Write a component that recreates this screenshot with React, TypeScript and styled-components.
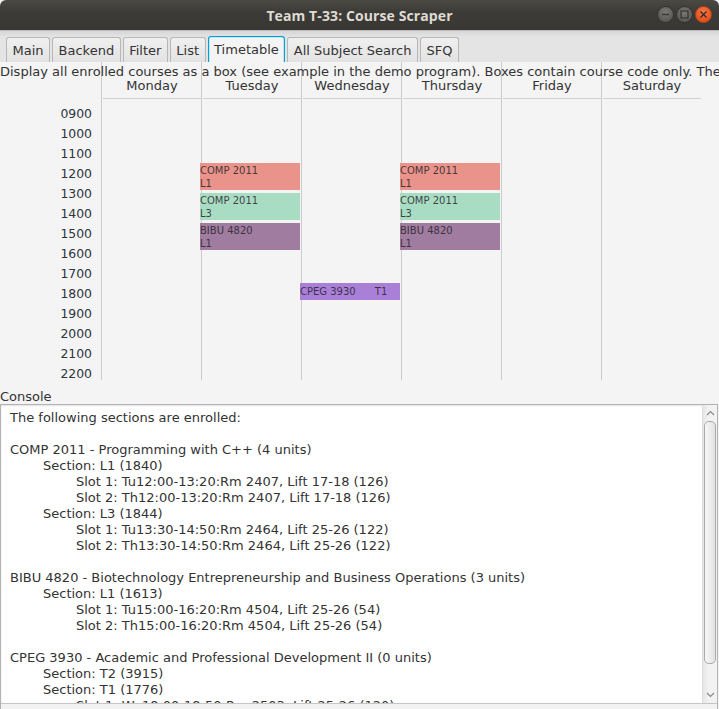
import styled, { createGlobalStyle, css } from "styled-components";

const GlobalStyle = createGlobalStyle`
  html, body {
    margin: 0;
    padding: 0;
    background: #f4f4f4;
  }
  * {
    box-sizing: border-box;
  }
`;

const FONT = `"DejaVu Sans", "Liberation Sans", sans-serif`;
const HOUR_HEIGHT = 20;
const FIRST_HOUR = 9;

const tabs = ["Main", "Backend", "Filter", "List", "Timetable", "All Subject Search", "SFQ"];
const days = ["Monday", "Tuesday", "Wednesday", "Thursday", "Friday", "Saturday"];
const hours = Array.from({ length: 14 }, (_, i) => String(FIRST_HOUR + i).padStart(2, "0") + "00");

type Block = {
  day: number;
  start: number;
  end: number;
  code: string;
  section: string;
  color: string;
  inline?: boolean;
};

const blocks: Block[] = [
  { day: 1, start: 12, end: 13 + 20 / 60, code: "COMP 2011", section: "L1", color: "#e9938a" },
  { day: 1, start: 13.5, end: 14 + 50 / 60, code: "COMP 2011", section: "L3", color: "#a8dcc3" },
  { day: 1, start: 15, end: 16 + 20 / 60, code: "BIBU 4820", section: "L1", color: "#9f7ca0" },
  { day: 3, start: 12, end: 13 + 20 / 60, code: "COMP 2011", section: "L1", color: "#e9938a" },
  { day: 3, start: 13.5, end: 14 + 50 / 60, code: "COMP 2011", section: "L3", color: "#a8dcc3" },
  { day: 3, start: 15, end: 16 + 20 / 60, code: "BIBU 4820", section: "L1", color: "#9f7ca0" },
  { day: 2, start: 18, end: 18 + 50 / 60, code: "CPEG 3930", section: "T1", color: "#a97fd8", inline: true },
];

const consoleLines: { level: number; text: string }[] = [
  { level: 0, text: "The following sections are enrolled:" },
  { level: 0, text: "" },
  { level: 0, text: "COMP 2011 - Programming with C++ (4 units)" },
  { level: 1, text: "Section: L1 (1840)" },
  { level: 2, text: "Slot 1: Tu12:00-13:20:Rm 2407, Lift 17-18 (126)" },
  { level: 2, text: "Slot 2: Th12:00-13:20:Rm 2407, Lift 17-18 (126)" },
  { level: 1, text: "Section: L3 (1844)" },
  { level: 2, text: "Slot 1: Tu13:30-14:50:Rm 2464, Lift 25-26 (122)" },
  { level: 2, text: "Slot 2: Th13:30-14:50:Rm 2464, Lift 25-26 (122)" },
  { level: 0, text: "" },
  { level: 0, text: "BIBU 4820 - Biotechnology Entrepreneurship and Business Operations (3 units)" },
  { level: 1, text: "Section: L1 (1613)" },
  { level: 2, text: "Slot 1: Tu15:00-16:20:Rm 4504, Lift 25-26 (54)" },
  { level: 2, text: "Slot 2: Th15:00-16:20:Rm 4504, Lift 25-26 (54)" },
  { level: 0, text: "" },
  { level: 0, text: "CPEG 3930 - Academic and Professional Development II (0 units)" },
  { level: 1, text: "Section: T2 (3915)" },
  { level: 1, text: "Section: T1 (1776)" },
  { level: 2, text: "Slot 1: We18:00-18:50:Rm 2503, Lift 25-26 (120)" },
];

export default function App() {
  return (
    <>
      <GlobalStyle />
      <Window>
        <TitleBar>
          <Title>Team T-33: Course Scraper</Title>
          <WindowButtons>
            <WinButton $variant="plain">
              <svg width="9" height="9" viewBox="0 0 9 9">
                <line x1="1" y1="4.5" x2="8" y2="4.5" stroke="#3a3935" strokeWidth="1.4" />
              </svg>
            </WinButton>
            <WinButton $variant="plain">
              <svg width="9" height="9" viewBox="0 0 9 9">
                <rect x="1" y="1" width="7" height="7" fill="none" stroke="#3a3935" strokeWidth="1.3" />
              </svg>
            </WinButton>
            <WinButton $variant="close">
              <svg width="9" height="9" viewBox="0 0 9 9">
                <path d="M1.5 1.5 L7.5 7.5 M7.5 1.5 L1.5 7.5" stroke="#3a2a22" strokeWidth="1.4" />
              </svg>
            </WinButton>
          </WindowButtons>
        </TitleBar>

        <TabBar>
          {tabs.map((t) => (
            <Tab key={t} $selected={t === "Timetable"}>
              {t}
            </Tab>
          ))}
        </TabBar>

        <Content>
          <TimetableArea>
            <TimeColumn>
              {hours.map((h) => (
                <TimeLabel key={h}>{h}</TimeLabel>
              ))}
            </TimeColumn>
            {days.map((d, i) => (
              <DayColumn key={d}>
                <DayHeader>{d}</DayHeader>
                <DayBody>
                  {blocks
                    .filter((b) => b.day === i)
                    .map((b, k) => (
                      <CourseBox
                        key={k}
                        $color={b.color}
                        $inline={b.inline}
                        style={{
                          top: 4 + (b.start - FIRST_HOUR) * HOUR_HEIGHT,
                          height: (b.end - b.start) * HOUR_HEIGHT,
                        }}
                      >
                        {b.inline ? (
                          <span>{b.code + "      " + b.section}</span>
                        ) : (
                          <>
                            <span>{b.code}</span>
                            <span>{b.section}</span>
                          </>
                        )}
                      </CourseBox>
                    ))}
                </DayBody>
              </DayColumn>
            ))}
            <Hint>
              Display all enrolled courses as a box (see example in the demo program). Boxes contain course code
              only. The
            </Hint>
          </TimetableArea>

          <ConsoleLabel>Console</ConsoleLabel>
          <TextArea>
            <TextRow>
              <TextBody>
                {consoleLines.map((l, i) => (
                  <ConsoleLine key={i} $level={l.level}>
                    {l.text || "\u00a0"}
                  </ConsoleLine>
                ))}
              </TextBody>
              <VScroll>
                <Arrow>
                  <svg width="9" height="6" viewBox="0 0 9 6">
                    <path d="M1 5 L4.5 1.5 L8 5" fill="none" stroke="#8a8a8a" strokeWidth="1.2" />
                  </svg>
                </Arrow>
                <Track>
                  <Thumb />
                </Track>
                <Arrow>
                  <svg width="9" height="6" viewBox="0 0 9 6">
                    <path d="M1 1 L4.5 4.5 L8 1" fill="none" stroke="#8a8a8a" strokeWidth="1.2" />
                  </svg>
                </Arrow>
              </VScroll>
            </TextRow>
            <HScroll />
          </TextArea>
        </Content>
      </Window>
    </>
  );
}

const Window = styled.div`
  width: 719px;
  height: 709px;
  overflow: hidden;
  display: flex;
  flex-direction: column;
  font-family: ${FONT};
  font-size: 13px;
  color: #333333;
  background: #f4f4f4;
`;

const TitleBar = styled.div`
  height: 30px;
  flex: none;
  display: flex;
  align-items: center;
  justify-content: center;
  position: relative;
  background: linear-gradient(#4a4944, #3c3b37 40%, #383733);
  border-radius: 6px 6px 0 0;
`;

const Title = styled.div`
  font-family: "Open Sans", "Liberation Sans", sans-serif;
  font-weight: 700;
  font-size: 14px;
  color: #dfdbd2;
  letter-spacing: 0.1px;
`;

const WindowButtons = styled.div`
  position: absolute;
  right: 7px;
  top: 6px;
  display: flex;
  gap: 2px;
`;

const WinButton = styled.div<{ $variant: "plain" | "close" }>`
  width: 17px;
  height: 17px;
  border-radius: 50%;
  display: flex;
  align-items: center;
  justify-content: center;
  ${(p) =>
    p.$variant === "close"
      ? css`
          background: radial-gradient(circle at 50% 35%, #f47a4a, #e5511d 70%);
          border: 1px solid #b8421a;
        `
      : css`
          background: radial-gradient(circle at 50% 35%, #7a7975, #5b5a56 70%);
          border: 1px solid #33322e;
        `}
`;

const TabBar = styled.div`
  height: 32px;
  flex: none;
  display: flex;
  align-items: flex-end;
  gap: 2px;
  padding-left: 6px;
  background: linear-gradient(#d6d6d6, #e4e4e4 6px, #e4e4e4);
  border-top: 1px solid #bdbdbd;
`;

const Tab = styled.div<{ $selected?: boolean }>`
  height: 26px;
  padding: 0 5.5px;
  display: flex;
  align-items: center;
  border-radius: 3px 3px 0 0;
  white-space: nowrap;
  ${(p) =>
    p.$selected
      ? css`
          border: 1px solid #039ed3;
          border-bottom: none;
          box-shadow: inset 1px 1px 0 #bfe7f6, inset -1px 0 0 #bfe7f6;
          background: #f4f4f4;
        `
      : css`
          border: 1px solid #b7b7b7;
          border-bottom: none;
          background: linear-gradient(#f0f0f0, #e2e2e2);
          height: 25px;
        `}
`;

const Content = styled.div`
  flex: 1;
  display: flex;
  flex-direction: column;
  background: #f4f4f4;
  min-height: 0;
`;

const TimetableArea = styled.div`
  position: relative;
  height: 326px;
  flex: none;
  display: flex;
  align-items: flex-start;
`;

const Hint = styled.div`
  position: absolute;
  top: 2px;
  left: 0;
  line-height: 16px;
  white-space: nowrap;
`;

const TimeColumn = styled.div`
  width: 101px;
  flex: none;
  padding-top: 42px;
  padding-right: 9px;
  display: flex;
  flex-direction: column;
  align-items: flex-end;
`;

const TimeLabel = styled.div`
  height: ${HOUR_HEIGHT}px;
  line-height: ${HOUR_HEIGHT}px;
  font-size: 12.4px;
  color: #2e3440;
`;

const DayColumn = styled.div`
  width: 100px;
  height: 318px;
  flex: none;
  display: flex;
  flex-direction: column;
  border-left: 1px solid #cbcbcb;
  &:last-of-type {
    border-right: 1px solid #cbcbcb;
  }
`;

const DayHeader = styled.div`
  height: 37px;
  flex: none;
  display: flex;
  align-items: flex-end;
  justify-content: center;
  padding-bottom: 4px;
  line-height: 16px;
  margin-left: 1px;
  border-bottom: 1px solid #d0d0d0;
`;

const DayBody = styled.div`
  position: relative;
  flex: 1;
`;

const CourseBox = styled.div<{ $color: string; $inline?: boolean }>`
  position: absolute;
  left: -2px;
  width: 100px;
  background: ${(p) => p.$color};
  font-size: 10px;
  line-height: 13px;
  color: rgba(40, 36, 44, 0.85);
  display: flex;
  flex-direction: column;
  white-space: pre;
  overflow: hidden;
  padding-top: ${(p) => (p.$inline ? "0" : "1px")};
  justify-content: ${(p) => (p.$inline ? "center" : "flex-start")};
`;

const ConsoleLabel = styled.div`
  height: 15px;
  line-height: 16px;
  flex: none;
  margin-top: 1px;
`;

const TextArea = styled.div`
  flex: 1;
  width: 718px;
  display: flex;
  flex-direction: column;
  border: 1px solid #b3b3b3;
  border-bottom: none;
  background: #ffffff;
  min-height: 0;
`;

const TextRow = styled.div`
  height: 298px;
  flex: none;
  display: flex;
  box-shadow: inset 0 1px 2px rgba(0, 0, 0, 0.12);
`;

const TextBody = styled.div`
  flex: 1;
  padding: 5px 0 0 9px;
  overflow: hidden;
`;

const ConsoleLine = styled.div<{ $level: number }>`
  line-height: 16px;
  white-space: nowrap;
  padding-left: ${(p) => p.$level * 33}px;
`;

const VScroll = styled.div`
  width: 15px;
  flex: none;
  display: flex;
  flex-direction: column;
  background: linear-gradient(90deg, #e6e6e6, #f2f2f2 40%, #f2f2f2);
  border-left: 1px solid #dcdcdc;
`;

const Arrow = styled.div`
  height: 16px;
  flex: none;
  display: flex;
  align-items: center;
  justify-content: center;
`;

const Track = styled.div`
  flex: 1;
  padding: 0 1px;
`;

const Thumb = styled.div`
  height: 243px;
  border: 1px solid #a9a9a9;
  border-radius: 5px;
  background: linear-gradient(90deg, #f7f7f7, #e3e3e3);
`;

const HScroll = styled.div`
  flex: 1;
  border-top: 1px solid #c6c6c6;
  background: #f2f2f2;
`;
